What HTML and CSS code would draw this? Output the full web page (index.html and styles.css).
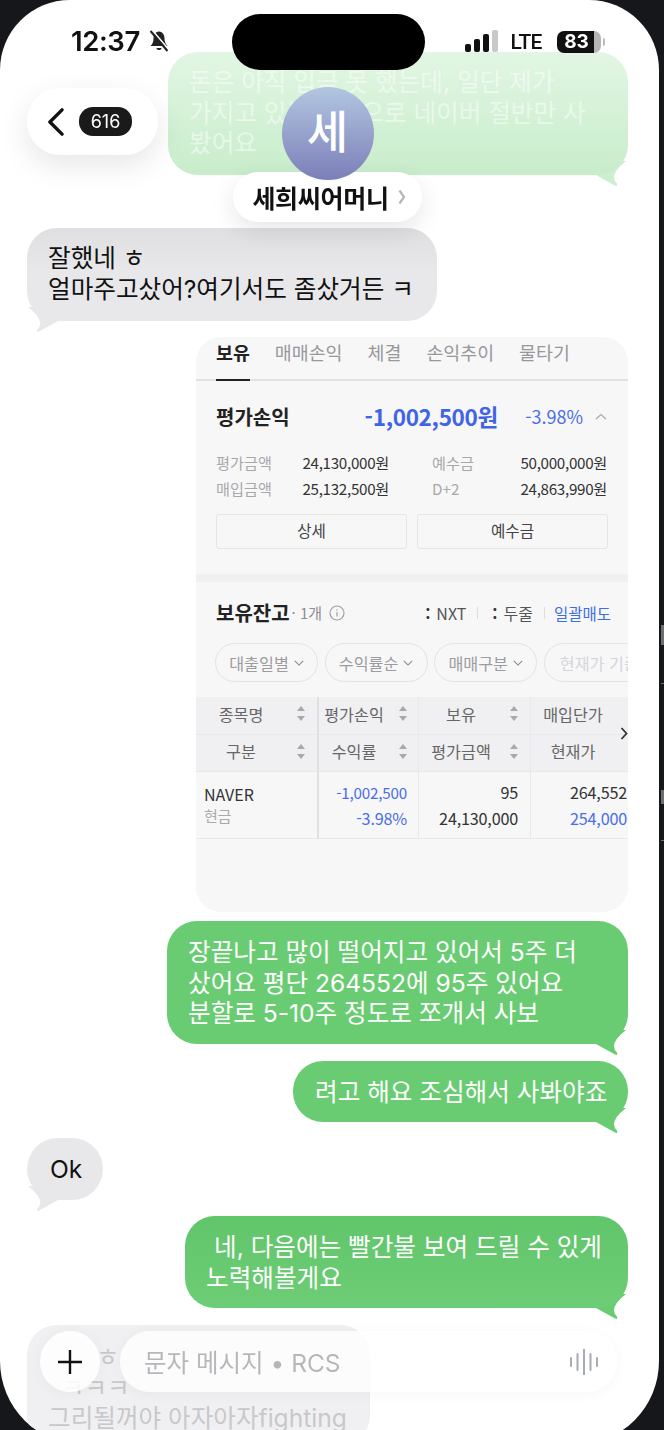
FILE: index.html
```html
<!doctype html>
<html lang="ko">
<head>
    <title>세희씨어머니</title>
    <meta charset="utf-8" />
    <meta name="viewport" content="width=device-width, initial-scale=1" />
    <link rel="stylesheet" href="styles.css">
</head>
<body>
<div class="bits">
    <i class="bit b1"></i><i class="bit b2"></i><i class="bit b3"></i><i class="bit b4"></i>
</div>

<div class="phone">
    <!-- conversation -->
    <div class="thread">
        <div class="bubble sent faded w-a">돈은 아직 입금 못 했는데, 일단 제가<br>가지고 있는 현금으로 네이버 절반만 사<br>봤어요
            <svg class="tail tail-r" viewBox="0 0 32 26"><path d="M0 15L19 25.500Q22 27 21 23.500Q12 15 30 1L0 0Z"/></svg>
        </div>

        <div class="bubble recv w-b top-shade">잘했네 ㅎ<br>얼마주고샀어?여기서도 좀샀거든 ㅋ
            <svg class="tail tail-l" viewBox="0 0 32 26"><path d="M31 15L12 25.500Q9 27 10.500 23.500Q19 15 1 1L31 0Z"/></svg>
        </div>

        <div class="shot">
            <div class="tabs">
                <span class="tab on">보유</span><span class="tab">매매손익</span><span class="tab">체결</span><span class="tab">손익추이</span><span class="tab">물타기</span>
            </div>

            <div class="pnl">
                <span class="pnl-title">평가손익</span>
                <span class="pnl-amt">-1,002,500원</span>
                <span class="pnl-pct">-3.98%</span>
                <svg class="pnl-chev" viewBox="0 0 12 7"><path d="M1 6L6 1.500L11 6"/></svg>
            </div>

            <div class="stats">
                <span class="k">평가금액</span><span class="v">24,130,000원</span><span></span><span class="k">예수금</span><span class="v">50,000,000원</span>
                <span class="k">매입금액</span><span class="v">25,132,500원</span><span></span><span class="k">D+2</span><span class="v">24,863,990원</span>
            </div>

            <div class="btns">
                <div class="btn">상세</div>
                <div class="btn">예수금</div>
            </div>

            <div class="band"></div>

            <div class="hold">
                <span class="hold-title">보유잔고</span>
                <span class="hold-count">· 1개</span>
                <svg class="info" viewBox="0 0 16 16"><circle cx="8" cy="8" r="7"/><path d="M8 7v4.500M8 4.200v1.300"/></svg>
                <span class="opt first"><b>:</b>NXT</span>
                <span class="sep"></span>
                <span class="opt second"><b>:</b>두줄</span>
                <span class="sep"></span>
                <span class="sell">일괄매도</span>
            </div>

            <div class="chips">
                <span class="chip">대출일별<svg viewBox="0 0 12 7"><path d="M1 1L6 6L11 1"/></svg></span>
                <span class="chip">수익률순<svg viewBox="0 0 12 7"><path d="M1 1L6 6L11 1"/></svg></span>
                <span class="chip">매매구분<svg viewBox="0 0 12 7"><path d="M1 1L6 6L11 1"/></svg></span>
                <span class="chip off">현재가 기준</span>
            </div>

            <div class="table">
                <div class="th c1"><span class="lab">종목명</span><svg class="sort" viewBox="0 0 8 15"><path d="M4 0L8 5H0ZM4 15L0 10H8Z"/></svg></div>
                <div class="th c2"><span class="lab">평가손익</span><svg class="sort" viewBox="0 0 8 15"><path d="M4 0L8 5H0ZM4 15L0 10H8Z"/></svg></div>
                <div class="th c3"><span class="lab">보유</span><svg class="sort" viewBox="0 0 8 15"><path d="M4 0L8 5H0ZM4 15L0 10H8Z"/></svg></div>
                <div class="th c4"><span class="lab">매입단가</span></div>
                <div class="th c1"><span class="lab">구분</span><svg class="sort" viewBox="0 0 8 15"><path d="M4 0L8 5H0ZM4 15L0 10H8Z"/></svg></div>
                <div class="th c2"><span class="lab">수익률</span><svg class="sort" viewBox="0 0 8 15"><path d="M4 0L8 5H0ZM4 15L0 10H8Z"/></svg></div>
                <div class="th c3"><span class="lab">평가금액</span><svg class="sort" viewBox="0 0 8 15"><path d="M4 0L8 5H0ZM4 15L0 10H8Z"/></svg></div>
                <div class="th c4"><span class="lab">현재가</span></div>

                <div class="td c1"><span class="name">NAVER</span><span class="sub">현금</span></div>
                <div class="td c2 num"><span class="blue small">-1,002,500</span><span class="blue">-3.98%</span></div>
                <div class="td c3 num"><span>95</span><span>24,130,000</span></div>
                <div class="td c4 num"><span>264,552</span><span class="blue">254,000</span></div>

                <svg class="more" viewBox="0 0 8 13"><path d="M1.500 1L6.500 6.500L1.500 12"/></svg>
            </div>
        </div>

        <div class="bubble sent w-c">장끝나고 많이 떨어지고 있어서 5주 더<br>샀어요 평단 264552에 95주 있어요<br>분할로 5-10주 정도로 쪼개서 사보
            <svg class="tail tail-r" viewBox="0 0 32 26"><path d="M0 15L19 25.500Q22 27 21 23.500Q12 15 30 1L0 0Z"/></svg>
        </div>

        <div class="bubble sent w-d">려고 해요 조심해서 사봐야죠
            <svg class="tail tail-r" viewBox="0 0 32 26"><path d="M0 15L19 25.500Q22 27 21 23.500Q12 15 30 1L0 0Z"/></svg>
        </div>

        <div class="bubble recv w-e">Ok
            <svg class="tail tail-l" viewBox="0 0 32 26"><path d="M31 15L12 25.500Q9 27 10.500 23.500Q19 15 1 1L31 0Z"/></svg>
        </div>

        <div class="bubble sent w-f"><span class="indent">네, 다음에는 빨간불 보여 드릴 수 있게</span><br>노력해볼게요
            <svg class="tail tail-r" viewBox="0 0 32 26"><path d="M0 15L19 25.500Q22 27 21 23.500Q12 15 30 1L0 0Z"/></svg>
        </div>

        <div class="bubble last w-g">&nbsp;&nbsp;&nbsp;&nbsp;&nbsp;&nbsp;&nbsp;ㅎ<br>&nbsp;&nbsp;ㅋㅋㅋ<br>그리될꺼야 아자아자fighting</div>
    </div>

    <!-- status bar -->
    <div class="status">
        <div class="status-left">
            <span class="time">12:37</span>
            <svg class="bell" viewBox="0 0 22 22"><path d="M11 1.500C7 2 5.500 5 5.500 8.500C5.500 12 4.500 14 2.500 16H19.500C17.500 14 16.500 12 16.500 8.500C16.500 5 15 2 11 1.500Z"/><path d="M8.500 18H13.500C13.500 20.800 8.500 20.800 8.500 18Z"/><path class="gap" d="M4.500 0.500L21.500 20.500"/><path class="slash" d="M2.500 1L19.500 21"/></svg>
        </div>
        <div class="island"></div>
        <div class="status-right">
            <div class="signal"><i class="s1"></i><i class="s2"></i><i class="s3"></i><i class="s4"></i></div>
            <span class="lte">LTE</span>
            <span class="battery">83</span>
            <i class="nub"></i>
        </div>
    </div>

    <!-- header -->
    <div class="back">
        <svg class="back-chev" viewBox="0 0 18 30"><path d="M16 2L3 15L16 28"/></svg>
        <span class="badge">616</span>
    </div>
    <div class="contact">
        <div class="avatar">세</div>
        <div class="contact-name">세희씨어머니<svg class="name-chev" viewBox="0 0 8 16"><path d="M1.500 1.500L6 8L1.500 14.500"/></svg></div>
    </div>

    <!-- input -->
    <div class="composer">
        <div class="plus"><svg viewBox="0 0 24 24"><path d="M12 0V24M0 12H24"/></svg></div>
        <div class="field">
            <span class="hint">문자 메시지 • RCS</span>
            <svg class="wave" viewBox="0 0 28 26"><path d="M1 9v8M7.500 5v16M14 0v26M20.500 5v16M27 9v8"/></svg>
        </div>
    </div>
</div>
</body>
</html>
```

FILE: styles.css
```css
html, body {
	margin:0;
	padding:0;
	height:1430px;
	overflow:hidden;
	background-color:#15171a;
}

body {
	font-family:Inter, "Noto Sans CJK KR", "Noto Sans", sans-serif;
	position:relative;
}

.phone {
	position:relative;
	width:659px;
	height:1445px;
	overflow:hidden;
	background-color:#fff;
	border-radius:70px 70px 84px 84px;
	filter:blur(.4px);
}

/* bits of the desktop behind the phone */
.bit {
	position:absolute;
	left:661px;
	width:3px;
	background-color:#6c6e70;
}
.b1 { top:625px; height:20px; }
.b2 { top:683px; height:1px; }
.b3 { top:790px; height:14px; }
.b4 { top:840px; height:1px; }

/* conversation */
.thread {
	display:flex;
	flex-direction:column;
	align-items:flex-end;
	padding:52px 31px 0 27px;
}

.bubble {
	position:relative;
	box-sizing:border-box;
	padding:16px 21px;
	border-radius:30px;
	font-size:24.600px;
	line-height:30.500px;
	white-space:nowrap;
	margin-top:16px;
}

.sent {
	background-color:#69cc72;
	color:#fff;
	fill:#69cc72;
}

.recv {
	align-self:flex-start;
	background-color:#e8e8ea;
	color:#111;
	fill:#e8e8ea;
}

.tail {
	position:absolute;
	bottom:-11px;
	width:32px;
	height:26px;
	z-index:-1;
}
.tail-r { right:0; }
.tail-l { left:0; }

.faded {
	margin-top:0;
	padding-top:15px;
	background:linear-gradient(#e2f6e3, #c8edcb);
	color:rgba(255,255,255,.5);
	fill:#ccefce;
}

.top-shade {
	background:linear-gradient(#dfdfe1, #e8e8ea 45%);
}

.w-a { width:460px; height:123px; }
.w-b { width:410px; height:93px; margin-top:53px; padding-top:15px; }
.w-c { width:461px; height:123px; margin-top:9px; }
.w-d { width:335px; height:61px; margin-top:17px; padding-left:22px; }
.w-e { width:76px; height:62px; padding-left:23px; border-radius:31px; }
.w-f { width:443px; height:92px; background:linear-gradient(#61c56a, #6dcd76); }
.indent { padding-left:8px; }

.last {
	align-self:flex-start;
	width:343px;
	height:120px;
	margin-top:17px;
	padding-top:17px;
	background-color:#f0f0f2;
	color:#c8c8cb;
}

/* pasted screenshot */
.shot {
	align-self:flex-end;
	width:432px;
	height:575px;
	overflow:hidden;
	margin-top:16px;
	background-color:#f7f7f8;
	border-radius:25px;
	color:#222;
	font-family:"Noto Sans CJK KR", sans-serif;
}

.tabs {
	display:flex;
	gap:25px;
	height:44px;
	box-sizing:border-box;
	padding-left:20px;
	border-bottom:2px solid #e2e2e3;
}

.tab {
	font-size:18.400px;
	line-height:30px;
	color:#98989c;
}

.tab.on {
	height:44px;
	box-sizing:border-box;
	border-bottom:2px solid #222;
	color:#222;
	font-weight:700;
}

.pnl {
	display:flex;
	align-items:center;
	height:70px;
	padding:0 21px 0 20px;
}

.pnl-title {
	font-size:20px;
	font-weight:700;
}

.pnl-amt {
	margin-left:75px;
	font-size:22.500px;
	font-weight:700;
	color:#3f64e8;
	letter-spacing:-.3px;
}

.pnl-pct {
	margin-left:auto;
	margin-right:12px;
	font-size:18px;
	color:#4a6eea;
}

.pnl-chev {
	width:12px;
	height:7px;
	fill:none;
	stroke:#aaa;
	stroke-width:1.300;
}

.stats {
	display:grid;
	grid-template-columns:86px 87px 43px 80px 95px;
	grid-auto-rows:26px;
	margin-top:-2px;
	padding-left:20px;
	font-size:15.200px;
	line-height:26px;
	white-space:nowrap;
}
.stats .k { color:#a8a8ab; }
.stats .v { color:#333; text-align:right; letter-spacing:-.3px; }

.btns {
	display:flex;
	gap:10px;
	margin:13px 20px 0;
}

.btn {
	flex:1;
	height:35px;
	box-sizing:border-box;
	border:1px solid #e5e5e6;
	border-radius:3px;
	text-align:center;
	font-size:15.600px;
	line-height:31px;
	color:#444;
}

.band {
	height:8px;
	margin-top:25px;
	background-color:#f0f0f1;
}

.hold {
	display:flex;
	align-items:center;
	height:61px;
	padding-left:20px;
}

.hold-title { font-size:20px; font-weight:700; }
.hold-count { margin-left:2px; font-size:15px; color:#8e8e92; white-space:nowrap; }

.info {
	width:16px;
	height:16px;
	margin-left:7px;
	fill:none;
	stroke:#a0a0a3;
	stroke-width:1.200;
}

.opt {
	font-size:16px;
	color:#555;
	white-space:nowrap;
}
.opt.first { margin-left:80px; }
.opt.second { margin-left:3px; }
.opt b { margin-right:6px; color:#333; }

.sep {
	width:1px;
	height:12px;
	margin:0 11px;
	background-color:#ddd;
}

.sell {
	margin-left:-2px;
	font-size:15.500px;
	color:#3f6ee0;
	white-space:nowrap;
}

.chips {
	display:flex;
	gap:6.600px;
	padding-left:19px;
}

.chip {
	display:flex;
	flex-shrink:0;
	align-items:center;
	justify-content:center;
	gap:5px;
	width:103px;
	height:39px;
	box-sizing:border-box;
	border:1px solid #e3e3e5;
	border-radius:20px;
	font-size:16.200px;
	color:#9c9ca0;
	white-space:nowrap;
}
.chip svg {
	width:10px;
	height:6px;
	fill:none;
	stroke:#88888c;
	stroke-width:1.300;
}
.chip.off {
	width:130px;
	justify-content:flex-start;
	padding-left:15px;
	color:#d5d5d8;
}

.table {
	position:relative;
	display:grid;
	grid-template-columns:123px 100px 112px 97px;
	grid-template-rows:37.500px 37.500px 67px;
	margin-top:15px;
	font-size:16.200px;
}

.th {
	display:flex;
	align-items:center;
	box-sizing:border-box;
	padding-bottom:3px;
	border-bottom:1px solid #e8e8ea;
	background-color:#f0f0f2;
	color:#666;
}

.lab { text-align:center; white-space:nowrap; }
.th.c1 .lab { width:90px; }
.th.c2 .lab { width:70px; }
.th.c3 .lab { width:84px; }
.th.c4 .lab { width:84px; }

.sort {
	width:8px;
	height:15px;
	fill:#a9a9ad;
	margin-left:auto;
}
.th.c1 .sort { margin-right:12px; }
.th.c2 .sort { margin-right:11px; }
.th.c3 .sort { margin-right:12px; }

.c1 { border-right:2px solid #e0e0e3; }
.c2, .c3 { border-right:1px solid #e9e9eb; }

.td {
	display:flex;
	flex-direction:column;
	justify-content:center;
	gap:4px;
	box-sizing:border-box;
	border-bottom:1px solid #e9e9eb;
	line-height:22px;
	color:#333;
	white-space:nowrap;
}

.td.c1 { gap:0; padding-left:8px; }
.num { text-align:right; letter-spacing:-.2px; }
.td.c2 { padding-right:11px; }
.td.c3 { padding-right:12px; }
.td.c4 { padding-left:39px; text-align:left; }
.name { font-size:16px; color:#333; }
.sub { font-size:15px; color:#aaa; }
.blue { color:#4a6eea; }
.small { font-size:15.200px; }

.more {
	position:absolute;
	top:30px;
	right:0;
	width:8px;
	height:13px;
	fill:none;
	stroke:#333;
	stroke-width:1.800;
}

/* status bar */
.status {
	position:absolute;
	top:14px;
	left:0;
	display:flex;
	align-items:center;
	height:56px;
	color:#111;
}

.status-left {
	display:flex;
	align-items:center;
	gap:8px;
	width:232px;
	box-sizing:border-box;
	padding-left:71px;
	margin-top:-2px;
}

.time {
	font-size:27.500px;
	font-weight:600;
	letter-spacing:-.4px;
}

.bell {
	width:22px;
	height:22px;
	fill:#222;
}
.bell .slash {
	fill:none;
	stroke:#222;
	stroke-width:2;
}
.bell .gap {
	fill:none;
	stroke:#fff;
	stroke-width:1.600;
}

.island {
	width:193px;
	height:56px;
	border-radius:28px;
	background-color:#000;
}

.status-right {
	display:flex;
	align-items:center;
	margin-left:40px;
}

.signal {
	display:flex;
	align-items:flex-end;
	gap:3.500px;
	height:22px;
	margin-top:-2px;
}
.signal i { width:5.500px; border-radius:2px; background-color:#111; }
.signal .s1 { height:8px; }
.signal .s2 { height:13px; }
.signal .s3 { height:18px; }
.signal .s4 { height:22px; background-color:#c8c8ca; }

.lte {
	margin-left:13px;
	font-family:Roboto, sans-serif;
	font-size:21px;
	font-weight:500;
	letter-spacing:-.8px;
	line-height:24px;
}

.battery {
	width:44px;
	height:22px;
	margin-left:15px;
	border-radius:7px;
	background:linear-gradient(90deg, #111 37px, #b5b5b7 37px);
	color:#fff;
	font-size:19px;
	font-weight:700;
	line-height:22px;
	text-align:center;
	padding-right:4px;
	box-sizing:border-box;
}

.nub {
	width:2px;
	height:8px;
	margin-left:2px;
	border-radius:0 2px 2px 0;
	background-color:#bbb;
}

/* header */
.back {
	position:absolute;
	top:88px;
	left:27px;
	display:flex;
	align-items:center;
	gap:15px;
	width:131px;
	height:67px;
	box-sizing:border-box;
	padding-left:20px;
	background-color:#fff;
	border-radius:33px;
	box-shadow:0 10px 30px rgba(0,0,0,.1);
}

.back-chev {
	width:17px;
	height:28px;
	fill:none;
	stroke:#111;
	stroke-width:3.600;
	stroke-linecap:round;
	stroke-linejoin:round;
}

.badge {
	width:53px;
	height:29px;
	border-radius:14px;
	background-color:#1a1a1a;
	color:#fff;
	font-size:18px;
	line-height:29px;
	text-align:center;
}

.contact {
	position:absolute;
	top:87px;
	left:233px;
	display:flex;
	flex-direction:column;
	align-items:center;
	width:189px;
}

.avatar {
	position:relative;
	z-index:1;
	width:92px;
	height:93px;
	border-radius:50%;
	background:linear-gradient(#b2c6e1, #7b7fb8);
	color:#fff;
	font-size:45px;
	font-weight:500;
	line-height:92px;
	text-align:center;
}

.contact-name {
	display:flex;
	align-items:center;
	justify-content:center;
	gap:9px;
	width:189px;
	height:50px;
	margin-top:-8px;
	padding-left:3px;
	box-sizing:border-box;
	background-color:#fff;
	border-radius:25px;
	box-shadow:0 8px 24px rgba(0,0,0,.1);
	font-size:25px;
	font-weight:700;
	color:#111;
	white-space:nowrap;
	letter-spacing:-.3px;
}

.name-chev {
	width:8px;
	height:16px;
	fill:none;
	stroke:#b5b5b7;
	stroke-width:2.200;
}

/* input */
.composer {
	position:absolute;
	top:1331px;
	left:40px;
	display:flex;
	gap:20px;
	width:577px;
}

.plus {
	display:flex;
	align-items:center;
	justify-content:center;
	flex-shrink:0;
	width:60px;
	height:61px;
	border-radius:50%;
	background-color:rgba(255,255,255,.85);
	box-shadow:0 2px 14px rgba(0,0,0,.04);
}
.plus svg {
	width:24px;
	height:24px;
	fill:none;
	stroke:#111;
	stroke-width:2.400;
}

.field {
	display:flex;
	flex:1;
	align-items:center;
	justify-content:space-between;
	height:61px;
	padding:0 19px 0 24px;
	border-radius:30px;
	background-color:rgba(255,255,255,.8);
	box-shadow:0 2px 14px rgba(0,0,0,.04);
}

.hint {
	font-size:24.500px;
	color:#b6b7bb;
	white-space:nowrap;
}

.wave {
	width:28px;
	height:26px;
	fill:none;
	stroke:#a9abb4;
	stroke-width:2;
	stroke-linecap:round;
}
```
